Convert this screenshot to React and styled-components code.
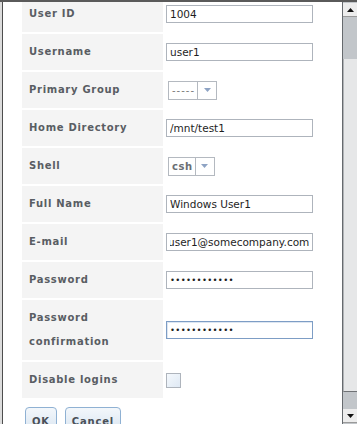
import React, { useEffect, useRef } from "react";
import styled, { createGlobalStyle } from "styled-components";

const GlobalStyle = createGlobalStyle`
  html, body {
    margin: 0;
    padding: 0;
    background: #ffffff;
    overflow: hidden;
  }
  * {
    box-sizing: border-box;
  }
`;

const ROWS = [
  { label: "User ID", kind: "text", value: "1004" },
  { label: "Username", kind: "text", value: "user1" },
  { label: "Primary Group", kind: "select", value: "-----", light: true },
  { label: "Home Directory", kind: "text", value: "/mnt/test1" },
  { label: "Shell", kind: "select", value: "csh" },
  { label: "Full Name", kind: "text", value: "Windows User1" },
  { label: "E-mail", kind: "text", value: "user1@somecompany.com", scrolled: true },
  { label: "Password", kind: "password", value: "abcdefghijkl" },
  { label: "Password confirmation", kind: "password", value: "abcdefghijkl", focused: true },
  { label: "Disable logins", kind: "checkbox" },
];

const Field = ({ row }) => {
  const ref = useRef(null);

  useEffect(() => {
    if (row.scrolled && ref.current) {
      ref.current.scrollLeft = ref.current.scrollWidth;
    }
  }, [row.scrolled]);

  if (row.kind === "select") {
    return (
      <Combo>
        <ComboText $light={row.light}>{row.value}</ComboText>
        <ComboArrow>
          <svg width="7" height="4" viewBox="0 0 7 4">
            <path d="M0 0 L7 0 L3.5 4 Z" fill="#8ea3c4" />
          </svg>
        </ComboArrow>
      </Combo>
    );
  }

  if (row.kind === "checkbox") {
    return <CheckBox />;
  }

  return (
    <TextBox
      ref={ref}
      type={row.kind === "password" ? "password" : "text"}
      defaultValue={row.value}
      readOnly
      $focused={row.focused}
      $secret={row.kind === "password"}
    />
  );
};

const App = () => {
  return (
    <>
      <GlobalStyle />
      <Frame>
        <LeftRail />
        <Content>
          <FormGrid>
            {ROWS.map((row) => (
              <React.Fragment key={row.label}>
                <LabelCell>{row.label}</LabelCell>
                <ValueCell>
                  <Field row={row} />
                </ValueCell>
              </React.Fragment>
            ))}
          </FormGrid>
          <ButtonRow>
            <Button>OK</Button>
            <Button>Cancel</Button>
          </ButtonRow>
        </Content>
        <ScrollBar>
          <ScrollButton>
            <svg width="7" height="4" viewBox="0 0 7 4">
              <path d="M0 4 L7 4 L3.5 0 Z" fill="#111" />
            </svg>
          </ScrollButton>
          <Track>
            <Thumb />
          </Track>
          <ScrollButton>
            <svg width="7" height="4" viewBox="0 0 7 4">
              <path d="M0 0 L7 0 L3.5 4 Z" fill="#111" />
            </svg>
          </ScrollButton>
        </ScrollBar>
      </Frame>
    </>
  );
};

export default App;

const Frame = styled.div`
  display: flex;
  width: 357px;
  height: 424px;
  border-top: 2px solid #5a5a5a;
  overflow: hidden;
`;

const LeftRail = styled.div`
  width: 3px;
  flex-shrink: 0;
  background: #dcdcdc;
  border-right: 1px solid #4e4e4e;
`;

const Content = styled.div`
  flex: 1;
  overflow: hidden;
  padding-left: 19px;
  background: #ffffff;
`;

const FormGrid = styled.div`
  display: grid;
  grid-template-columns: 141px 150px;
  column-gap: 2px;
  row-gap: 2px;
  margin-top: -6px;
`;

const LabelCell = styled.div`
  background: #f4f4f4;
  padding: 6px 7px;
  line-height: 24px;
  min-height: 36px;
  font-family: "DejaVu Sans", sans-serif;
  font-size: 10px;
  font-weight: bold;
  letter-spacing: 0.7px;
  color: #595d63;
`;

const ValueCell = styled.div`
  display: flex;
  align-items: center;
  padding-left: 1px;
`;

const TextBox = styled.input`
  width: 147px;
  height: 18px;
  padding: 0 3px;
  margin: 0;
  border: 1px solid ${(p) => (p.$focused ? "#7d9dc5" : "#aeb4bc")};
  box-shadow: ${(p) => (p.$focused ? "inset 1px 1px 0 #dde6f1" : "none")};
  border-radius: 0;
  background: #ffffff;
  font-family: "DejaVu Sans", sans-serif;
  font-size: ${(p) => (p.$secret ? "8.5px" : "10.5px")};
  letter-spacing: ${(p) => (p.$secret ? "0.3px" : "0")};
  color: #1e1e1e;
  outline: none;
`;

const Combo = styled.div`
  display: flex;
  height: 19px;
  margin-left: 2px;
  border: 1px solid #b4b9c0;
  background: #ffffff;
`;

const ComboText = styled.span`
  display: flex;
  align-items: center;
  padding: 0 2px 0 3px;
  min-width: 25px;
  font-family: "DejaVu Sans", sans-serif;
  font-size: 10px;
  font-weight: ${(p) => (p.$light ? "normal" : "bold")};
  letter-spacing: ${(p) => (p.$light ? "1px" : "0.6px")};
  color: ${(p) => (p.$light ? "#7a7a7a" : "#6a6e74")};
  border-right: 1px solid #b4b9c0;
`;

const ComboArrow = styled.span`
  display: flex;
  align-items: center;
  justify-content: center;
  width: 18px;
`;

const CheckBox = styled.span`
  display: block;
  width: 15px;
  height: 15px;
  border: 1px solid #aeb4bc;
  background: linear-gradient(135deg, #f4f8fc 0%, #dfe9f4 100%);
`;

const ButtonRow = styled.div`
  display: flex;
  gap: 8px;
  margin-top: 9px;
  padding-left: 3px;
`;

const Button = styled.button`
  height: 26px;
  padding: 3px 6px 0;
  border: 1px solid #8fb1d3;
  border-radius: 4px;
  background: linear-gradient(#f3f7fb, #d9e5f1);
  font-family: "DejaVu Sans", sans-serif;
  font-size: 10px;
  font-weight: bold;
  letter-spacing: 0.8px;
  color: #4a5058;
`;

const ScrollBar = styled.div`
  display: flex;
  flex-direction: column;
  width: 15px;
  flex-shrink: 0;
  background: #c2c6ca;
  border-left: 1px solid #666a6e;
`;

const ScrollButton = styled.div`
  display: flex;
  align-items: center;
  justify-content: center;
  height: 14px;
  margin: 1px 0 1px 0;
  background: #ededed;
  border-bottom: 1px solid #9a9a9a;
`;

const Track = styled.div`
  flex: 1;
  padding-top: 41px;
  padding-bottom: 16px;
`;

const Thumb = styled.div`
  height: 100%;
  background: #e6e7e8;
  border-left: 1px solid #b0b3b6;
  border-bottom: 1px solid #6f7275;
`;
